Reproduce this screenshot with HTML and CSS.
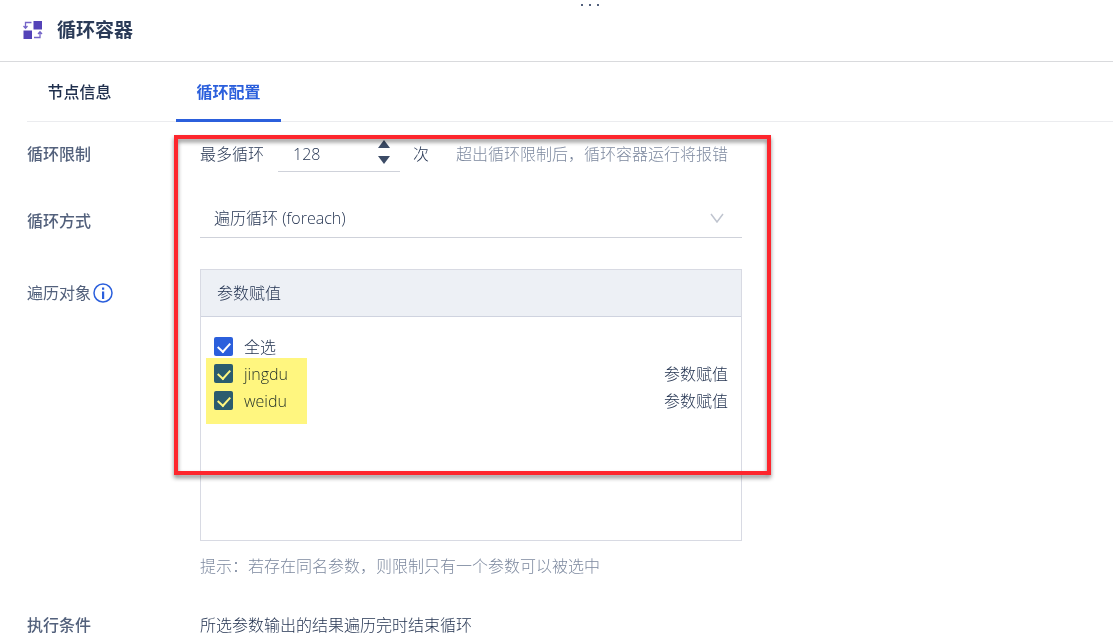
FILE: index.html
```html
<!DOCTYPE html>
<html lang="zh-CN">
<head>
<meta charset="utf-8">
<title>循环容器</title>
<link rel="stylesheet" href="styles.css">
</head>
<body>
<main class="panel">
  <button class="drag-handle" type="button" aria-label="拖动"><i></i><i></i><i></i></button>
  <header class="panel-header">
    <svg class="logo" viewBox="0 0 20 20" aria-hidden="true">
      <path fill="#5443b8" d="M10.500 1H19v8.500h-8.500zM.500 10.500H9V19H.500z"/>
      <path fill="none" stroke="#7465c8" stroke-width="1.300" d="M8.500 2.500H2.500V8M.5 6l2 2.300L4.500 6M11 17.500h6V12M15 14l2-2.300 2 2.300"/>
    </svg>
    <h1 class="title">循环容器</h1>
  </header>
  <nav class="tabs">
    <button class="tab" type="button">节点信息</button>
    <button class="tab tab-active" type="button">循环配置</button>
  </nav>
  <form class="form">
    <div class="row row-limit">
      <label class="label" for="limit">循环限制</label>
      <div class="limit">
        <span>最多循环</span>
        <span class="number">
          <input class="number-input" id="limit" type="number" value="128">
          <span class="steppers">
            <button class="step" type="button" aria-label="增加"><svg viewBox="0 0 12 8"><path d="M6 0l6 8H0z"/></svg></button>
            <button class="step" type="button" aria-label="减少"><svg viewBox="0 0 12 8"><path d="M0 0h12L6 8z"/></svg></button>
          </span>
        </span>
        <span>次</span>
        <span class="muted limit-note">超出循环限制后，循环容器运行将报错</span>
      </div>
    </div>
    <div class="row row-mode">
      <label class="label" for="mode">循环方式</label>
      <div class="select-wrap">
        <select class="select" id="mode"><option>遍历循环 (foreach)</option></select>
        <svg class="chevron" viewBox="0 0 14 10" aria-hidden="true"><path d="M1 1l6 8 6-8"/></svg>
      </div>
    </div>
    <div class="row row-target">
      <div class="label label-info">遍历对象<svg class="info" viewBox="0 0 20 20" aria-hidden="true"><circle cx="10" cy="10" r="9" fill="none" stroke="#2b5fdc" stroke-width="1.500"/><path fill="#2b5fdc" d="M9 4.500h2.200v2.200H9zM9 8.500h2.200V16H9z"/></svg></div>
      <div class="target">
        <section class="box">
          <h2 class="box-head">参数赋值</h2>
          <div class="options">
            <div class="option"><label class="check-label"><input class="check" type="checkbox" checked>全选</label></div>
            <div class="option"><label class="check-label"><input class="check" type="checkbox" checked>jingdu</label><span>参数赋值</span></div>
            <div class="option"><label class="check-label"><input class="check" type="checkbox" checked>weidu</label><span>参数赋值</span></div>
            <div class="highlight"></div>
          </div>
        </section>
        <p class="hint muted">提示：若存在同名参数，则限制只有一个参数可以被选中</p>
      </div>
    </div>
    <div class="row row-condition">
      <div class="label">执行条件</div>
      <div>所选参数输出的结果遍历完时结束循环</div>
    </div>
    <div class="callout"></div>
  </form>
</main>
</body>
</html>
```
FILE: styles.css
```css
* { box-sizing: border-box; }

body {
  margin: 0;
  background: #fff;
  color: #1f2f4d;
  font: 300 16px/24px "Open Sans", "Noto Sans CJK SC", sans-serif;
}

button, input, select { font: inherit; color: inherit; }
button { border: 0; background: none; padding: 0; cursor: pointer; }

.panel { position: relative; min-height: 100vh; }

.drag-handle {
  position: absolute;
  top: 4px;
  left: 53%;
  display: flex;
  gap: 6px;
  transform: translateX(-50%);
}
.drag-handle i { width: 2px; height: 2px; background: #53617c; }

.panel-header {
  display: flex;
  align-items: center;
  gap: 14px;
  height: 62px;
  padding: 0 23px 2px;
  border-bottom: 1px solid #d9dadd;
}
.logo { width: 20px; height: 20px; }
.title { margin: 0; color: #2b3b58; font-size: 19px; font-weight: 700; }

.tabs {
  display: flex;
  gap: 44px;
  height: 60px;
  margin-left: 27px;
  border-bottom: 1px solid #ebecef;
}
.tab {
  min-width: 105px;
  height: 60px;
  padding: 2px 20px 0;
  border-bottom: 3px solid transparent;
  font-weight: 500;
}
.tab-active { color: #2b5fdc; border-color: #2b5fdc; font-weight: 700; }

.form { position: relative; padding-left: 27px; }
.row { display: grid; grid-template-columns: 173px minmax(0, 542px); }
.label { display: flex; align-items: center; align-self: start; color: #53617c; font-weight: 500; }
.label-info { font-weight: 400; }
.muted { color: #7d899f; }

.row-limit { padding-top: 20px; }
.limit { display: flex; white-space: nowrap; }
.number {
  display: flex;
  width: 122px;
  height: 30px;
  margin: 0 13px 0 14px;
  border-bottom: 1px solid #cfd2da;
}
.number-input {
  flex: 1;
  min-width: 0;
  height: 24px;
  padding: 0 0 0 15px;
  border: 0;
  outline: 0;
  background: none;
  appearance: textfield;
}
.number-input::-webkit-inner-spin-button { appearance: none; margin: 0; }
.steppers { display: flex; flex-direction: column; gap: 8px; width: 12px; height: 24px; margin: -2px 10px 0 0; }
.step { display: block; height: 8px; line-height: 0; }
.step svg { width: 12px; height: 8px; fill: #3c4b66; }
.limit-note { margin-left: 27px; }

.row-mode { padding-top: 28px; }
.row-mode .label { padding-top: 9px; }
.select-wrap { position: relative; width: 100%; }
.select {
  width: 100%;
  height: 38px;
  padding: 0 36px 1px 14px;
  border: 0;
  border-bottom: 1px solid #cfd2da;
  border-radius: 0;
  outline: 0;
  background: none;
  appearance: none;
}
.chevron {
  position: absolute;
  top: 13px;
  right: 18px;
  width: 14px;
  height: 10px;
  fill: none;
  stroke: #bfc4cf;
  stroke-width: 1.5;
  pointer-events: none;
}

.row-target { padding-top: 31px; }
.row-target .label { padding-top: 12px; }
.info { width: 20px; height: 20px; margin-left: 2px; }
.box { min-height: 272px; border: 1px solid #d8dae3; }
.box-head {
  margin: 0;
  padding: 11px 16px;
  border-bottom: 1px solid #cfd3df;
  background: #edf0f5;
  font-size: 16px;
  font-weight: 300;
}
.options { position: relative; padding: 16px 13px; }
.option { display: flex; align-items: center; justify-content: space-between; height: 27px; }
.check-label { display: flex; align-items: center; gap: 11px; }
.check {
  display: grid;
  place-items: center;
  width: 19px;
  height: 19px;
  margin: 0;
  border-radius: 2px;
  background: #2b5fdc;
  appearance: none;
}
.check:checked::before {
  content: "";
  width: 6px;
  height: 10px;
  margin-bottom: 2px;
  border: solid #fff;
  border-width: 0 2px 2px 0;
  transform: rotate(42deg);
}
.highlight {
  position: absolute;
  top: 41px;
  left: 5px;
  width: 101px;
  height: 66px;
  background: #fff67f;
  mix-blend-mode: multiply;
  pointer-events: none;
}
.hint { margin: 13px 0 0; }

.row-condition { padding-top: 38px; line-height: 18px; }

.callout {
  position: absolute;
  top: 13px;
  left: 174px;
  width: 597px;
  height: 340px;
  border: 4px solid #fd262d;
  filter: drop-shadow(0 3px 2px rgba(0, 0, 0, 0.45));
  pointer-events: none;
}
```
